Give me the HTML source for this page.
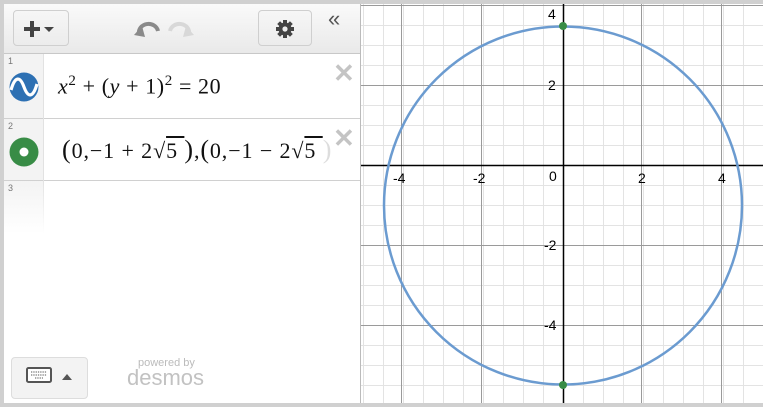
<!DOCTYPE html>
<html><head><meta charset="utf-8"><style>
*{margin:0;padding:0;box-sizing:border-box}
body{width:763px;height:407px;background:#d0d0d0;position:relative;overflow:hidden;font-family:"Liberation Sans",sans-serif}
#panel{position:absolute;left:4px;top:4px;width:357px;height:399px;background:#fff;border-right:1px solid #bbb}
#hdr{position:absolute;left:0;top:0;width:356px;height:50px;background:linear-gradient(#fafafa,#e9e9e9);border-bottom:1px solid #c8c8c8}
.btn{position:absolute;border:1px solid #cfcfcf;border-radius:4px;background:linear-gradient(#f6f6f6,#ececec)}
#numcol{position:absolute;left:0;top:50px;width:39px;height:180px;background:linear-gradient(#f3f3f3 70%,#fff)}
.sep{position:absolute;left:0;width:356px;height:1px;background:#d0d0d0}
.num{position:absolute;left:4px;font-size:9px;color:#777}
.math{position:absolute;font-family:"Liberation Serif",serif;font-size:22px;color:#111;white-space:nowrap}
.math i{font-style:italic}
.x{position:absolute;color:#c4c4c4;font-size:26px;font-weight:bold;line-height:1}
#graph{position:absolute;left:361px;top:4px}
</style></head><body>
<div id="panel">
<div id="hdr">
 <div class="btn" style="left:9px;top:6px;width:56px;height:36px"></div>
 <svg style="position:absolute;left:20px;top:17px" width="36" height="16"><rect x="0" y="6" width="16" height="4" fill="#444"/><rect x="6" y="0" width="4" height="16" fill="#444"/><path d="M20 6h10l-5 5z" fill="#444"/></svg>
 <svg style="position:absolute;left:130px;top:17px" width="60" height="20"><path d="M5 13 A9 8 0 0 1 24 10" stroke="#8a8a8a" stroke-width="4" fill="none"/><path d="M0 14l8-9 3 11z" fill="#8a8a8a"/><path d="M55 13 A9 8 0 0 0 36 10" stroke="#d8d8d8" stroke-width="4" fill="none"/><path d="M60 14l-8-9-3 11z" fill="#d8d8d8"/></svg>
 <div class="btn" style="left:254px;top:6px;width:54px;height:36px"></div>
 <svg style="position:absolute;left:271px;top:15px" width="20" height="20" viewBox="-10 -10 20 20"><g fill="#444"><circle r="6.5"/><rect x="-2" y="-9" width="4" height="18"/><rect x="-9" y="-2" width="18" height="4"/><rect x="-2" y="-9" width="4" height="18" transform="rotate(45)"/><rect x="-2" y="-9" width="4" height="18" transform="rotate(-45)"/></g><circle r="2.6" fill="#eee"/></svg>
 <div style="position:absolute;left:324px;top:2px;font-size:22px;color:#555;letter-spacing:-3px">«</div>
</div>
<div id="numcol"></div>
<div class="sep" style="top:114px"></div>
<div class="sep" style="top:176px"></div>
<div style="position:absolute;left:39px;top:50px;width:1px;height:180px;background:linear-gradient(#e2e2e2 70%,#fff)"></div>
<div class="num" style="top:52px">1</div>
<div class="num" style="top:117px">2</div>
<div class="num" style="top:179px">3</div>
<svg style="position:absolute;left:5px;top:68px" width="30" height="30" viewBox="0 0 30 30"><circle cx="15" cy="15" r="14.5" fill="#2d70b3"/><path d="M2 18 C6 4,11 4,15 15 S24 26,28 12" stroke="#fff" stroke-width="3.2" fill="none"/></svg>
<svg style="position:absolute;left:5px;top:133px" width="30" height="30"><circle cx="15" cy="15" r="14.5" fill="#388c46"/><circle cx="15" cy="15" r="4.5" fill="#fff"/></svg>
<div class="math" style="left:54px;top:69px;letter-spacing:0.6px"><i>x</i><sup style="font-size:15px">2</sup> + (<i>y</i> + 1)<sup style="font-size:15px">2</sup> = 20</div>
<div class="math" style="left:58px;top:131px;letter-spacing:0.9px"><span style="font-size:26px">(</span>0,−1 + 2√<span style="text-decoration:overline">5 </span><span style="font-size:26px">)</span>,<span style="font-size:26px">(</span>0,−1 − 2√<span style="text-decoration:overline">5 </span><span style="font-size:26px;color:#ddd">)</span></div>
<div class="x" style="left:329px;top:56px">✕</div>
<div class="x" style="left:329px;top:121px">✕</div>
<div class="btn" style="left:7px;top:353px;width:77px;height:42px;background:#f3f3f3;border-color:#ddd"></div>
<svg style="position:absolute;left:21px;top:362px" width="52" height="20"><rect x="2" y="2" width="24" height="14" rx="1.5" fill="#fff" stroke="#555" stroke-width="2"/><path d="M6 6h16M6 9h16M10 12h8" stroke="#777" stroke-width="1.3" stroke-dasharray="1.3 1"/><path d="M37 14l5-6 5 6z" fill="#555"/></svg>
<div style="position:absolute;left:134px;top:353px;font-size:11px;color:#bbb">powered by</div>
<div style="position:absolute;left:123px;top:361px;font-size:22px;color:#c2c2c2">desmos</div>
</div>
<svg id="graph" width="402" height="399" viewBox="361 4 402 399">
<rect x="361" y="4" width="402" height="399" fill="#fff"/>
<g stroke="#e3e3e3" stroke-width="1">
<path d="M363.5 4V403M383.5 4V403M403.5 4V403M423.5 4V403M443.5 4V403M463.5 4V403M483.5 4V403M503.5 4V403M523.5 4V403M543.5 4V403M583.5 4V403M603.5 4V403M623.5 4V403M643.5 4V403M663.5 4V403M683.5 4V403M703.5 4V403M723.5 4V403M743.5 4V403"/>
<path d="M361 5.5H763M361 25.5H763M361 45.5H763M361 65.5H763M361 85.5H763M361 105.5H763M361 125.5H763M361 145.5H763M361 185.5H763M361 205.5H763M361 225.5H763M361 245.5H763M361 265.5H763M361 285.5H763M361 305.5H763M361 325.5H763M361 345.5H763M361 365.5H763M361 385.5H763"/>
</g>
<g stroke="#9a9a9a" stroke-width="1">
<path d="M401.5 4V403M481.5 4V403M641.5 4V403M721.5 4V403M361 5.5H763M361 85.5H763M361 245.5H763M361 325.5H763"/>
</g>
<path d="M563.5 4V403M361 165.5H763" stroke="#000" stroke-width="1.5"/>
<circle cx="563" cy="205.5" r="179" fill="none" stroke="#6b9bd0" stroke-width="2.5"/>
<circle cx="563" cy="26" r="4" fill="#388c46"/>
<circle cx="563" cy="385" r="4" fill="#388c46"/>
<g font-family="Liberation Sans,sans-serif" font-size="14" fill="#000">
<text x="393" y="183">-4</text><text x="473" y="183">-2</text><text x="549" y="181">0</text><text x="638" y="183">2</text><text x="718" y="183">4</text>
<text x="548" y="19">4</text><text x="548" y="90">2</text><text x="544" y="250">-2</text><text x="544" y="330">-4</text>
</g>
</svg>
</body></html>
